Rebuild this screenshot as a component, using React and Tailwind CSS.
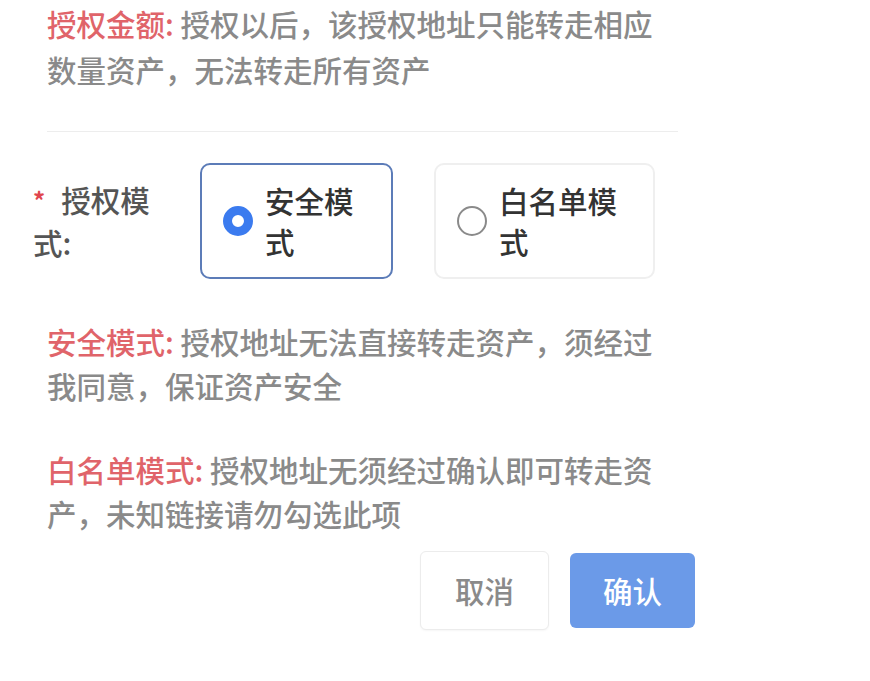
const FONT = { fontFamily: '"Noto Sans CJK SC", "Noto Sans", sans-serif' }

function Note({ label, children, className = '' }) {
  return (
    <p className={`ml-[47px] w-[620px] text-[29.5px] leading-[44px] font-medium text-[#8a8a8a] ${className}`}>
      <span className="text-[#e0646a]">{label}:</span> {children}
    </p>
  )
}

function RadioBox({ checked, label, className = '', textW = '' }) {
  return (
    <div
      className={`flex items-center h-[116px] rounded-[10px] pl-[21px] bg-white ${
        checked ? 'border-2 border-[#5c7cb8]' : 'border-2 border-[#efefef]'
      } ${className}`}
    >
      {checked ? (
        <span className="w-[30px] h-[30px] rounded-full border-[9px] border-[#3b7bef] bg-white flex-shrink-0" />
      ) : (
        <span className="w-[30px] h-[30px] rounded-full border-2 border-[#8a8a8a] bg-white flex-shrink-0" />
      )}
      <span className={`ml-[12px] text-[29.5px] leading-[41px] font-medium text-[#333] ${textW}`}>{label}</span>
    </div>
  )
}

export default function App() {
  return (
    <div className="w-[870px] h-[681px] bg-white overflow-hidden" style={FONT}>
      <Note label="授权金额" className="pt-[0px] leading-[46px]">
        授权以后，该授权地址只能转走相应数量资产，无法转走所有资产
      </Note>

      <div className="ml-[47px] mt-[39px] w-[631px] h-px bg-[#ededed]" />

      {/* ── 授权模式 ── */}
      <div className="flex items-center mt-[31px] ml-[33px]">
        <div className="w-[130px] text-[29.5px] leading-[43px] font-medium text-[#555]">
          <span className="text-[#e0464e] text-[24px] font-bold align-top mr-[16px]">*</span>
          授权模式:
        </div>
        <RadioBox checked label="安全模式" className="ml-[37px] w-[193px]" textW="w-[110px]" />
        <RadioBox label="白名单模式" className="ml-[41px] w-[221px]" textW="w-[125px]" />
      </div>

      <Note label="安全模式" className="mt-[40px]">
        授权地址无法直接转走资产，须经过我同意，保证资产安全
      </Note>
      <Note label="白名单模式" className="mt-[40px]">
        授权地址无须经过确认即可转走资产，未知链接请勿勾选此项
      </Note>

      {/* ── Buttons ── */}
      <div className="flex justify-end items-center gap-[21px] w-[695px] mt-[16px]">
        <button className="w-[129px] h-[79px] rounded-[6px] border border-[#ececec] bg-white text-[29.5px] font-medium text-[#8a8a8a] shadow-[0_1px_2px_rgba(0,0,0,0.04)]">
          取消
        </button>
        <button className="w-[125px] h-[75px] rounded-[6px] bg-[#6b9ae8] text-[29.5px] font-medium text-white">
          确认
        </button>
      </div>
    </div>
  )
}
